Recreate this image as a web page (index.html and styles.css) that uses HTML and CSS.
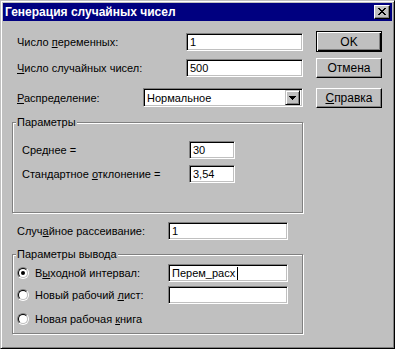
FILE: index.html
```html
<!DOCTYPE html>
<html lang="ru">

<head>
    <meta charset="UTF-8">
    <title>Генерация случайных чисел</title>
    <link rel="stylesheet" href="styles.css">
</head>

<body>

    <div class="window">
        <div class="titlebar">
            <span class="title">Генерация случайных чисел</span>
            <span class="close">
                <svg width="8" height="7" viewBox="0 0 8 7" shape-rendering="crispEdges">
                    <rect x="0" y="0" width="2" height="1" />
                    <rect x="6" y="0" width="2" height="1" />
                    <rect x="1" y="1" width="2" height="1" />
                    <rect x="5" y="1" width="2" height="1" />
                    <rect x="2" y="2" width="4" height="1" />
                    <rect x="3" y="3" width="2" height="1" />
                    <rect x="2" y="4" width="4" height="1" />
                    <rect x="1" y="5" width="2" height="1" />
                    <rect x="5" y="5" width="2" height="1" />
                    <rect x="0" y="6" width="2" height="1" />
                    <rect x="6" y="6" width="2" height="1" />
                </svg>
            </span>
        </div>

        <div class="content">
            <div class="form">
                <div class="row r-vars">
                    <span class="label l-top">Число <u>п</u>еременных:</span>
                    <div class="edit e-top">1</div>
                </div>
                <div class="row r-count">
                    <span class="label l-top"><u>Ч</u>исло случайных чисел:</span>
                    <div class="edit e-top">500</div>
                </div>
                <div class="row r-dist">
                    <span class="label l-dist"><u>Р</u>аспределение:</span>
                    <div class="combo">
                        <span class="combo-text">Нормальное</span>
                        <span class="combo-btn">
                            <svg width="7" height="4" viewBox="0 0 7 4" shape-rendering="crispEdges">
                                <rect x="0" y="0" width="7" height="1" />
                                <rect x="1" y="1" width="5" height="1" />
                                <rect x="2" y="2" width="3" height="1" />
                                <rect x="3" y="3" width="1" height="1" />
                            </svg>
                        </span>
                    </div>
                </div>

                <div class="group g-params">
                    <div class="legend">Параметры</div>
                    <div class="row r-mean">
                        <span class="label l-param">Сре<u>д</u>нее =</span>
                        <div class="edit e-param">30</div>
                    </div>
                    <div class="row r-dev">
                        <span class="label l-param">Стандартное <u>о</u>тклонение =</span>
                        <div class="edit e-param">3,54</div>
                    </div>
                </div>

                <div class="row r-seed">
                    <span class="label l-seed">Случ<u>а</u>йное рассеивание:</span>
                    <div class="edit e-out">1</div>
                </div>

                <div class="group g-output">
                    <div class="legend">Параметры вывода</div>
                    <div class="row r-opt1">
                        <span class="radio checked"><span class="radio-in"></span></span>
                        <span class="label l-out">В<u>ы</u>ходной интервал:</span>
                        <div class="edit e-out">Перем_расх<span class="caret"></span></div>
                    </div>
                    <div class="row r-opt2">
                        <span class="radio"><span class="radio-in"></span></span>
                        <span class="label l-out">Новый рабочий <u>л</u>ист:</span>
                        <div class="edit e-out"></div>
                    </div>
                    <div class="row r-opt3">
                        <span class="radio"><span class="radio-in"></span></span>
                        <span class="label">Новая рабочая <u>к</u>нига</span>
                    </div>
                </div>
            </div>

            <div class="buttons">
                <div class="btn btn-default">OK</div>
                <div class="btn b-cancel">Отмена</div>
                <div class="btn b-help"><u>С</u>правка</div>
            </div>
        </div>
    </div>

</body>

</html>
```

FILE: styles.css
```css
* {
    box-sizing: border-box;
}

body {
    margin: 0;
    background-color: #c0c0c0;
    font-family: "Liberation Sans", Arial, sans-serif;
    font-size: 11px;
    color: #000;
}

u {
    text-underline-offset: 1px;
}

.window {
    width: 395px;
    height: 349px;
    background-color: #c0c0c0;
    border: 1px solid;
    border-color: #c0c0c0 #000 #000 #c0c0c0;
    box-shadow: inset 1px 1px #fff, inset -1px -1px #808080;
    padding: 2px;
    display: flex;
    flex-direction: column;
}

.titlebar {
    height: 18px;
    background-color: #000080;
    color: #fff;
    display: flex;
    align-items: center;
    justify-content: space-between;
    padding: 0 2px;
}

.title {
    font-weight: bold;
    font-size: 12px;
}

.close {
    width: 16px;
    height: 14px;
    background-color: #c0c0c0;
    border: 1px solid;
    border-color: #fff #000 #000 #fff;
    box-shadow: inset -1px -1px #808080;
    display: flex;
    justify-content: center;
    align-items: center;
    padding-bottom: 1px;
}

.close svg,
.combo-btn svg {
    fill: #000;
    display: block;
}

.content {
    display: flex;
    padding-left: 9px;
}

.form {
    width: 292px;
    padding-top: 12px;
}

.row {
    display: flex;
    align-items: center;
    height: 18px;
    padding-left: 5px;
}

.label {
    flex: none;
    white-space: nowrap;
}

.edit {
    height: 18px;
    background-color: #fff;
    border: 1px solid;
    border-color: #808080 #fff #fff #808080;
    box-shadow: inset 1px 1px #000, inset -1px -1px #c0c0c0;
    padding: 2px 0 0 3px;
    line-height: 13px;
    display: flex;
    align-items: flex-start;
}

.l-top { width: 169px; }
.e-top { width: 117px; }

.r-count { margin-top: 8px; }

.r-dist {
    margin-top: 11px;
    height: 19px;
}

.l-dist { width: 126px; }

.combo {
    width: 160px;
    height: 19px;
    background-color: #fff;
    border: 1px solid;
    border-color: #808080 #fff #fff #808080;
    box-shadow: inset 1px 1px #000, inset -1px -1px #c0c0c0;
    display: flex;
    align-items: center;
    justify-content: space-between;
    padding: 1px 2px 1px 1px;
}

.combo-text {
    padding-left: 2px;
}

.combo-btn {
    width: 15px;
    height: 15px;
    background-color: #c0c0c0;
    border: 1px solid;
    border-color: #c0c0c0 #000 #000 #c0c0c0;
    box-shadow: inset 1px 1px #fff, inset -1px -1px #808080;
    display: flex;
    justify-content: center;
    align-items: center;
}

.group {
    width: 291px;
    border: 1px solid #808080;
    box-shadow: inset 1px 1px #fff, 1px 1px #fff;
}

.legend {
    width: fit-content;
    background-color: #c0c0c0;
    padding: 0 1px;
    margin: -7px 0 0 -1px;
    line-height: 13px;
    height: 13px;
}

.g-params {
    margin-top: 15px;
    height: 91px;
    padding-left: 4px;
}

.r-mean { margin-top: 12px; }
.r-dev { margin-top: 6px; }

.l-param { width: 167px; }
.e-param { width: 46px; }

.r-seed { margin-top: 9px; }
.l-seed { width: 151px; }
.e-out { width: 120px; }

.g-output {
    margin-top: 14px;
    height: 80px;
    padding-left: 4px;
}

.g-output .row {
    padding-left: 0;
}

.r-opt1 { margin-top: 3px; }
.r-opt2 { margin-top: 4px; }
.r-opt3 { margin-top: 6px; }

.l-out { width: 133px; }

.radio {
    width: 12px;
    height: 12px;
    border-radius: 50%;
    border: 1px solid;
    border-color: #808080 #fff #fff #808080;
    margin-right: 6px;
    flex: none;
}

.radio-in {
    display: flex;
    justify-content: center;
    align-items: center;
    width: 10px;
    height: 10px;
    border-radius: 50%;
    border: 1px solid;
    border-color: #000 #c0c0c0 #c0c0c0 #000;
    background-color: #fff;
}

.radio.checked .radio-in::after {
    content: "";
    width: 4px;
    height: 4px;
    border-radius: 50%;
    background-color: #000;
}

.caret {
    width: 1px;
    height: 13px;
    background-color: #000;
    margin-left: 2px;
}

.buttons {
    margin-left: 12px;
    padding-top: 10px;
    display: flex;
    flex-direction: column;
}

.btn {
    width: 66px;
    height: 20px;
    border: 1px solid;
    border-color: #fff #000 #000 #fff;
    box-shadow: inset -1px -1px #808080;
    display: flex;
    justify-content: center;
    align-items: center;
    font-size: 12px;
}

.btn-default {
    height: 21px;
    border-color: #000;
    box-shadow: inset 1px 1px #fff, inset -1px -1px #000, inset -2px -2px #808080;
}

.b-cancel { margin-top: 6px; }
.b-help { margin-top: 10px; }
```
